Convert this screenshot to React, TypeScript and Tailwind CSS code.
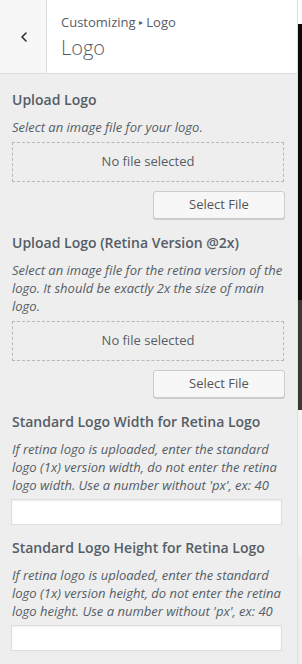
import { ChevronLeft } from 'lucide-react';

function UploadField({ title, desc }: { title: string; desc: string }) {
  return (
    <div>
      <div className="text-[14px] leading-[20px] font-semibold text-[#555d66]">{title}</div>
      <p className="mt-2 text-[13px] leading-[18px] italic text-[#555d66]">{desc}</p>
      <div className="mt-[6px] mr-[1px] h-[40px] flex items-center justify-center border border-dashed border-[#b4b9be] text-[13px] text-[#555d66]">
        No file selected
      </div>
      <div className="mt-[9px] flex justify-end">
        <button className="w-[132px] h-[28px] rounded-[3px] border border-[#ccc] bg-[#f7f7f7] text-[13px] text-[#555] shadow-[0_1px_0_#ccc]">
          Select File
        </button>
      </div>
    </div>
  );
}

function TextField({ title, desc }: { title: string; desc: string }) {
  return (
    <div>
      <div className="text-[14px] leading-[20px] font-semibold text-[#555d66]">{title}</div>
      <p className="mt-2 text-[13px] leading-[18px] italic text-[#555d66]">{desc}</p>
      <input
        type="text"
        className="mt-[5px] ml-[-1px] block w-[271px] h-[26px] border border-[#ddd] bg-white shadow-[inset_0_1px_2px_rgba(0,0,0,0.07)] outline-none"
      />
    </div>
  );
}

export default function App() {
  return (
    <div className="w-[302px] h-[664px] flex overflow-hidden font-['Open_Sans',sans-serif] bg-[#eee]">
      {/* Panel */}
      <div className="w-[298px] flex flex-col border-r border-[#ddd] bg-[#eee]">
        <div className="h-[74px] flex border-b border-[#ddd] bg-white">
          <button className="w-[47px] flex items-center justify-center pl-[2px] bg-[#f7f7f7] border-r border-[#ddd] text-[#23282d]">
            <ChevronLeft className="w-[16px] h-[16px]" strokeWidth={2.25} />
          </button>
          <div className="pl-[14px] pt-[13px]">
            <div className="text-[13px] leading-[18px] text-[#555d66]">
              Customizing <span className="text-[8px] relative -top-[2px]">▸</span> Logo
            </div>
            <div className="mt-[1px] text-[20px] leading-[28px] font-light text-[#555d66]">Logo</div>
          </div>
        </div>

        <div className="pl-[12px] pr-[12px] pt-[16px] flex flex-col">
          <UploadField title="Upload Logo" desc="Select an image file for your logo." />
          <div className="mt-[14px]">
            <UploadField
              title="Upload Logo (Retina Version @2x)"
              desc="Select an image file for the retina version of the logo. It should be exactly 2x the size of main logo."
            />
          </div>
          <div className="mt-[14px]">
            <TextField
              title="Standard Logo Width for Retina Logo"
              desc="If retina logo is uploaded, enter the standard logo (1x) version width, do not enter the retina logo width. Use a number without 'px', ex: 40"
            />
          </div>
          <div className="mt-[13px]">
            <TextField
              title="Standard Logo Height for Retina Logo"
              desc="If retina logo is uploaded, enter the standard logo (1x) version height, do not enter the retina logo height. Use a number without 'px', ex: 40"
            />
          </div>
        </div>
      </div>

      {/* Preview sliver */}
      <div className="flex-1 flex flex-col">
        <div className="h-[24px] bg-white" />
        <div className="h-[276px] bg-[#0a0a0a]" />
        <div className="h-[110px] bg-[#3a3835]" />
        <div className="h-[147px] bg-[#f4f4f4]" />
        <div className="flex-1 bg-[#eee]" />
      </div>
    </div>
  );
}
